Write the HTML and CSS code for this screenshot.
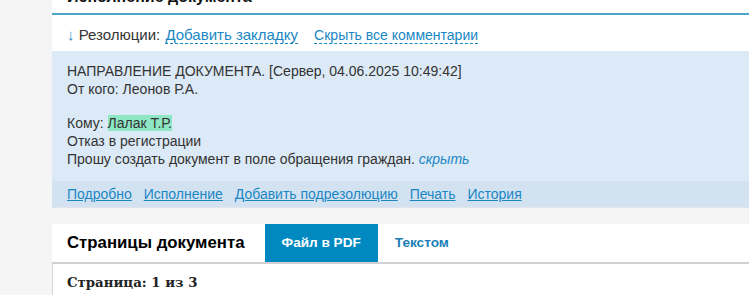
FILE: index.html
```html
<!DOCTYPE html>
<html lang="ru">
<head>
  <meta charset="UTF-8">
  <title>Исполнение документа</title>
  <link rel="stylesheet" href="styles.css">
</head>
<body>

  <div class="main">
    <div class="card">
      <h2 class="card-title">Исполнение документа</h2>

      <div class="res-head">
        <span class="arrow">↓</span> Резолюции:
        <a href="#" class="dashed">Добавить закладку</a>
        <a href="#" class="dashed small">Скрыть все комментарии</a>
      </div>

      <div class="resolution">
        <div class="res-body">
          <p>НАПРАВЛЕНИЕ ДОКУМЕНТА. [Сервер, 04.06.2025 10:49:42]<br>
          От кого: Леонов Р.А.</p>
          <p>Кому: <span class="mark">Лалак Т.Р.</span><br>
          Отказ в регистрации<br>
          Прошу создать документ в поле обращения граждан. <a href="#" class="hide">скрыть</a></p>
        </div>
        <div class="res-links">
          <a href="#">Подробно</a>
          <a href="#">Исполнение</a>
          <a href="#">Добавить подрезолюцию</a>
          <a href="#">Печать</a>
          <a href="#">История</a>
        </div>
      </div>
    </div>

    <div class="tabs">
      <div class="tab tab-title">Страницы документа</div>
      <div class="tab tab-active">Файл в PDF</div>
      <div class="tab tab-link">Текстом</div>
    </div>

    <div class="pages">
      <div class="page-num">Страница: 1 из 3</div>
    </div>
  </div>

</body>
</html>
```

FILE: styles.css
```css
body {
  margin: 0;
  background-color: #f5f5f5;
  font-family: "Liberation Sans", Arial, sans-serif;
  color: #333;
  overflow: hidden;
}

a {
  color: #1a87c4;
}

.main {
  margin-left: 52px;
}

.card {
  background-color: #fff;
}

.card-title {
  margin: -13px 0 0 0;
  padding: 0 15px 6px;
  font-size: 16px;
  line-height: 20px;
  color: #111;
  border-bottom: 2px solid #4aa5c9;
}

.res-head {
  padding: 10px 15px 6px;
  font-size: 15px;
  line-height: 20px;
}

.arrow {
  color: #2a8cc8;
}

.dashed {
  text-decoration: none;
  border-bottom: 1px dashed #1a87c4;
  margin-left: 1px;
}

.dashed + .dashed {
  margin-left: 12px;
}

.small {
  font-size: 14px;
}

.resolution {
  background-color: #dce9f6;
  font-size: 14px;
  line-height: 18px;
}

.res-body {
  padding: 11px 15px 13px;
}

.res-body p {
  margin: 0;
}

.res-body p + p {
  margin-top: 16px;
}

.mark {
  background-color: #8ee6c3;
}

.hide {
  font-style: italic;
  text-decoration: none;
}

.res-links {
  background-color: #d3e2f0;
  padding: 4px 15px 4px;
  border-bottom: 1px solid #dfe5ea;
}

.res-links a {
  margin-right: 8px;
}

.tabs {
  display: flex;
  margin-top: 16px;
  background-color: #fff;
  border-bottom: 2px solid #d0d0d0;
}

.tab {
  height: 38px;
  line-height: 38px;
  font-weight: bold;
}

.tab-title {
  padding: 0 20px 0 15px;
  font-size: 16.8px;
  color: #000;
}

.tab-active {
  padding: 0 17px;
  font-size: 13.6px;
  color: #fff;
  background-color: #0089c1;
}

.tab-link {
  padding: 0 17px;
  font-size: 13.6px;
  color: #1a7fb8;
}

.pages {
  background-color: #fff;
  border-left: 1px solid #d6d6d6;
  padding: 11px 14px 10px;
  height: 40px;
}

.page-num {
  font-family: "DejaVu Serif", serif;
  font-weight: bold;
  font-size: 13.3px;
  color: #222;
}
```
